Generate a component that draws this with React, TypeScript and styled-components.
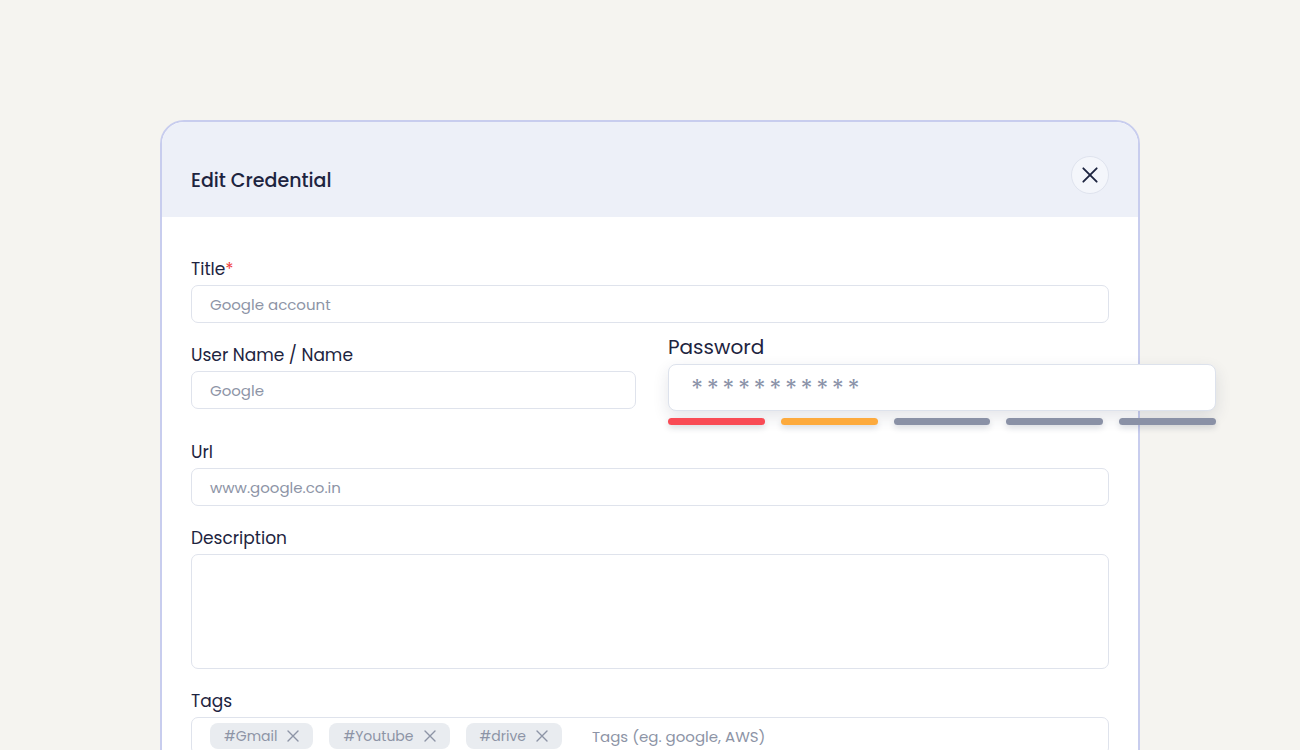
import React from "react";
import styled, { createGlobalStyle } from "styled-components";

const Global = createGlobalStyle`
  html, body { margin: 0; padding: 0; height: 750px; overflow: hidden; background: #f5f4f0; }
  body { font-family: Poppins, Inter, "Noto Sans", sans-serif; color: #1d2440; }
`;
const Page = styled.div`padding: 120px 0 0 160px;`;
const Card = styled.div`
  width: 976px; min-height: 720px; border: 2px solid #c8cdee; border-radius: 24px; background: #fff; overflow: visible;
`;
const Header = styled.div`
  height: 95px; background: #edf0f8; border-radius: 22px 22px 0 0;
  display: flex; align-items: center; justify-content: space-between; padding: 22px 29px 0 29px; box-sizing: border-box;
`;
const Heading = styled.h1`margin: 0; font-size: 19px; font-weight: 500; color: #1d2440;`;
const Close = styled.button`
  width: 38px; height: 38px; border-radius: 50%; border: 1px solid #dfe3ee; background: #f4f6fb;
  display: flex; align-items: center; justify-content: center; padding: 0; margin-top: -12px;
`;
const Body = styled.div`padding: 40px 29px 0 29px; display: flex; flex-direction: column; gap: 20px;`;
const Field = styled.div`display: flex; flex-direction: column; gap: 4px;`;
const Label = styled.label<{ $big?: boolean }>`
  font-size: ${p => (p.$big ? "20px" : "17px")}; line-height: ${p => (p.$big ? "28px" : "24px")}; color: #1d2440;
  span { color: #ef3b3b; }
`;
const Input = styled.div<{ $h?: number }>`
  height: ${p => p.$h ?? 38}px; box-sizing: border-box; border: 1px solid #dfe3ec; border-radius: 7px;
  padding: 0 18px; display: flex; align-items: center; font-size: 15px; color: #8d94a6; background: #fff;
`;
const Row = styled.div`display: grid; grid-template-columns: 445px 1fr; gap: 32px; align-items: start;`;
const Pw = styled.div`width: 548px; display: flex; flex-direction: column; margin: -10px 0 -5px 0;`;
const PwBox = styled.div`
  height: 47px; box-sizing: border-box; margin-top: 3px; border: 1px solid #dde2ec; border-radius: 8px; background: #fff;
  box-shadow: 0 6px 16px rgba(30,40,70,0.12); padding: 4px 22px 0 22px; display: flex; align-items: center;
  font-size: 25px; letter-spacing: 3.5px; color: #8a92a8;
`;
const Bars = styled.div`display: flex; gap: 16px; margin-top: 7px;`;
const Bar = styled.div<{ $c: string }>`
  flex: 1; height: 7px; border-radius: 4px; background: ${p => p.$c}; box-shadow: 0 3px 6px rgba(30,40,70,0.15);
`;
const Chip = styled.div`
  height: 26px; border-radius: 8px; background: #e9ecf0; color: #8d94a6; font-size: 14px;
  display: flex; align-items: center; gap: 10px; padding: 0 14px;
`;
const Tags = styled(Input)`gap: 16px; padding: 0 18px;`;
const Ph = styled.span`margin-left: 14px;`;

const X = ({ s = 12, c = "#8d94a6" }: { s?: number; c?: string }) => (
  <svg width={s} height={s} viewBox="0 0 12 12" stroke={c} strokeWidth="1.4" strokeLinecap="round">
    <path d="M1 1l10 10M11 1L1 11" />
  </svg>
);

export default function App() {
  return (
    <>
      <Global />
      <Page>
        <Card>
          <Header>
            <Heading>Edit Credential</Heading>
            <Close><X s={16} c="#1d2440" /></Close>
          </Header>
          <Body>
            <Field>
              <Label>Title<span>*</span></Label>
              <Input>Google account</Input>
            </Field>
            <Row>
              <Field>
                <Label>User Name / Name</Label>
                <Input>Google</Input>
              </Field>
              <Pw>
                <Label $big>Password</Label>
                <PwBox>***********</PwBox>
                <Bars>
                  <Bar $c="#f94b55" /><Bar $c="#fdaa3d" /><Bar $c="#8a91a6" /><Bar $c="#8a91a6" /><Bar $c="#8a91a6" />
                </Bars>
              </Pw>
            </Row>
            <Field>
              <Label>Url</Label>
              <Input>www.google.co.in</Input>
            </Field>
            <Field>
              <Label>Description</Label>
              <Input $h={115} />
            </Field>
            <Field>
              <Label>Tags</Label>
              <Tags>
                <Chip>#Gmail <X /></Chip>
                <Chip>#Youtube <X /></Chip>
                <Chip>#drive <X /></Chip>
                <Ph>Tags (eg. google, AWS)</Ph>
              </Tags>
            </Field>
          </Body>
        </Card>
      </Page>
    </>
  );
}
